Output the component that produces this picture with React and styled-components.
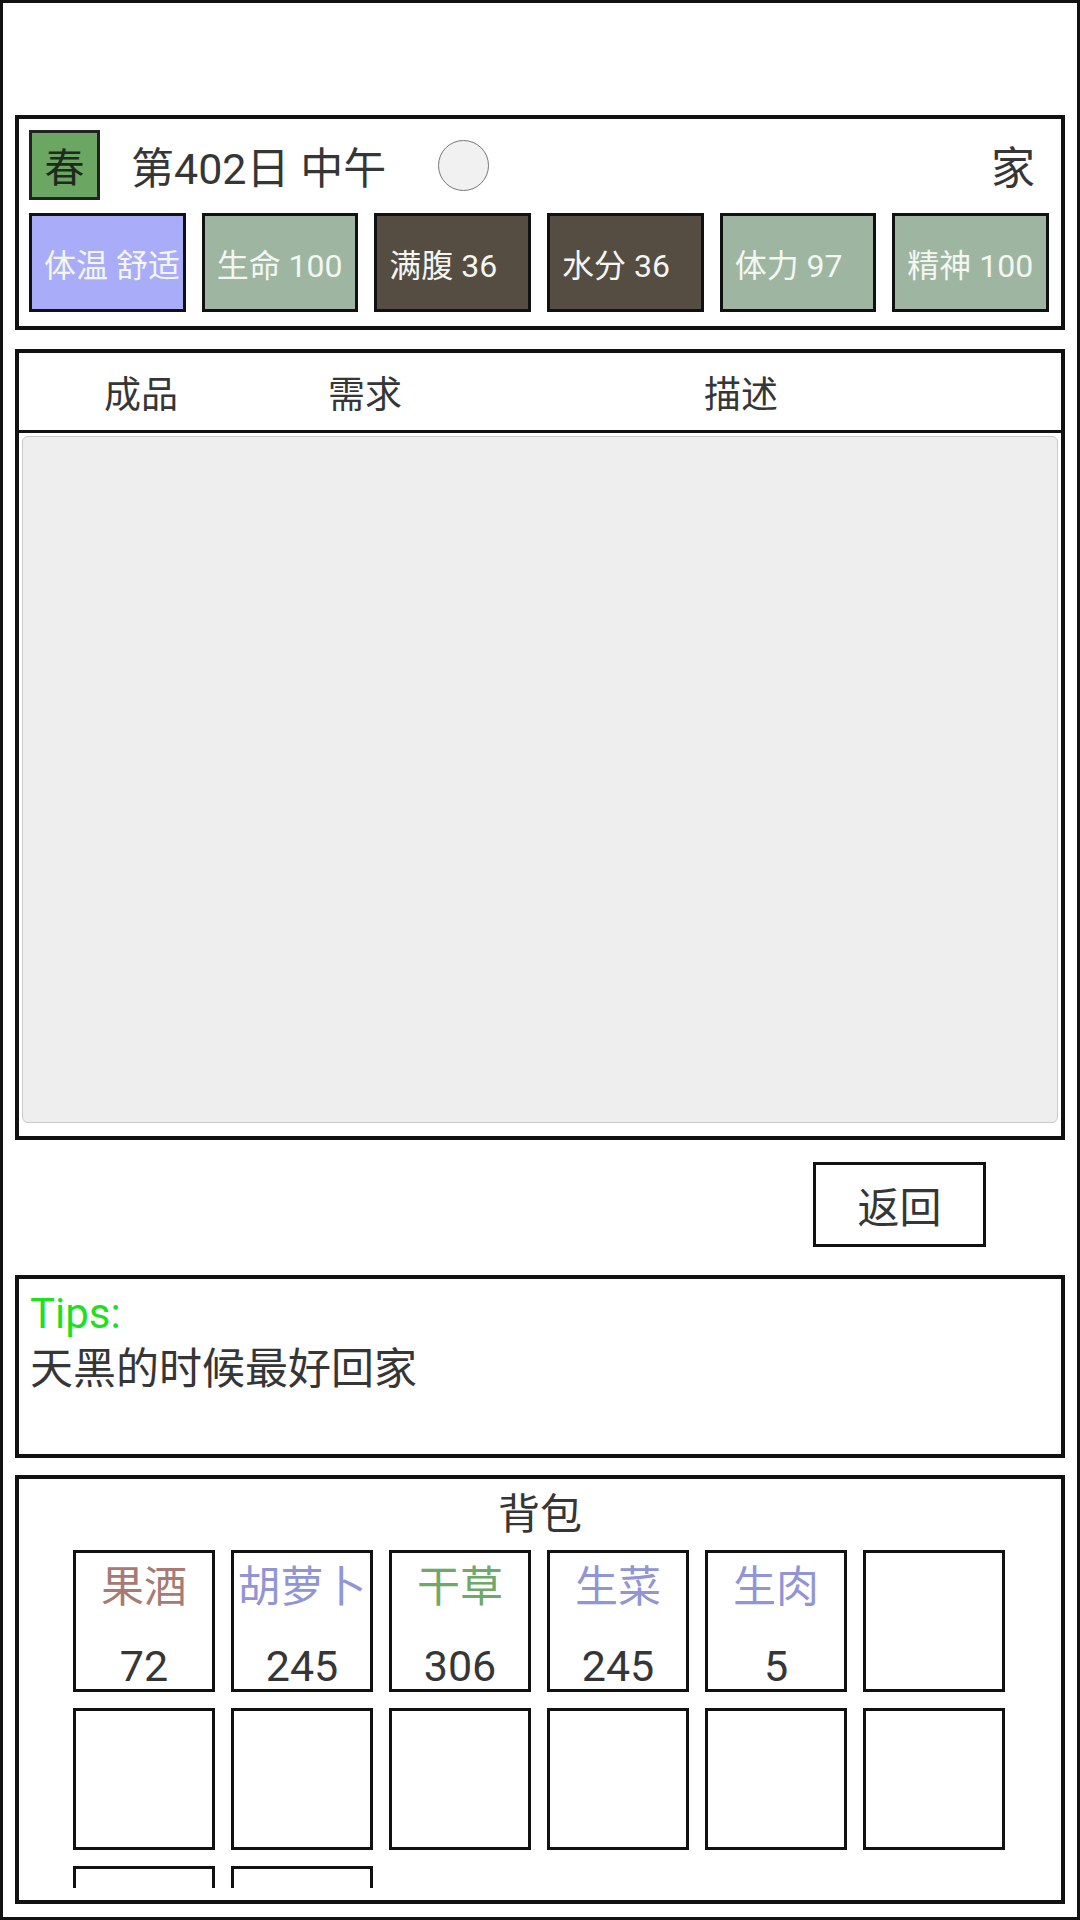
import React from "react";
import styled, { createGlobalStyle } from "styled-components";

const GlobalStyle = createGlobalStyle`
  html, body {
    margin: 0;
    padding: 0;
    background: #fff;
  }
  body {
    font-family: Roboto, "Noto Sans CJK SC", sans-serif;
    color: #363636;
  }
  * { box-sizing: border-box; }
`;

const Screen = styled.div`
  width: 1080px;
  height: 1920px;
  border: 3px solid #111;
  padding: 112px 12px 13px;
  display: flex;
  flex-direction: column;
  overflow: hidden;
`;

const Panel = styled.section`
  border: 4px solid #111;
  background: #fff;
  flex-shrink: 0;
`;

/* ---- status bar ---- */
const StatusPanel = styled(Panel)`
  height: 215px;
  padding: 11px 12px 14px 10px;
`;

const TopRow = styled.div`
  display: flex;
  align-items: center;
  height: 70px;
`;

const SeasonBadge = styled.div`
  width: 71px;
  height: 70px;
  border: 3px solid #222;
  background: #6ba663;
  color: #1e2a1e;
  font-size: 40px;
  display: flex;
  align-items: center;
  justify-content: center;
`;

const DayLabel = styled.div`
  margin-left: 31px;
  font-size: 43px;
  color: #363636;
`;

const SunDial = styled.div`
  width: 51px;
  height: 51px;
  margin-left: 52px;
  border-radius: 50%;
  background: #f1f1f1;
  border: 1.5px solid #777;
`;

const Location = styled.div`
  margin-left: auto;
  margin-right: 14px;
  font-size: 44px;
  color: #363636;
`;

const StatRow = styled.div`
  display: grid;
  grid-template-columns: repeat(6, minmax(0, 1fr));
  gap: 16px;
  margin-top: 13px;
  height: 99px;
`;

const StatBox = styled.div`
  background: ${(p) => p.$bg};
  border: 3px solid #111;
  padding: 0 12px;
  display: flex;
  align-items: center;
  font-size: 32px;
  color: #f4f6f2;
  white-space: nowrap;
  overflow: visible;
`;

/* ---- crafting table ---- */
const CraftPanel = styled(Panel)`
  margin-top: 19px;
  height: 791px;
  display: flex;
  flex-direction: column;
`;

const HeaderRow = styled.div`
  height: 80px;
  border-bottom: 3px solid #111;
  display: grid;
  grid-template-columns: 244px 204px 548px;
  align-items: center;
  font-size: 37px;
  color: #363636;
  text-align: center;
`;

const ListArea = styled.div`
  flex: 1;
  margin: 3px 3px 13px;
  background: #eeeeee;
  border: 1px solid #c9c9c9;
  border-radius: 6px;
`;

/* ---- actions ---- */
const ActionRow = styled.div`
  height: 135px;
  flex-shrink: 0;
  display: flex;
  justify-content: flex-end;
  align-items: flex-start;
  padding: 22px 79px 0 0;
`;

const BackButton = styled.button`
  width: 173px;
  height: 85px;
  border: 3px solid #111;
  background: #fff;
  font-family: Roboto, "Noto Sans CJK SC", sans-serif;
  font-size: 42px;
  color: #363636;
  padding: 0;
`;

/* ---- tips ---- */
const TipsPanel = styled(Panel)`
  height: 183px;
  padding: 8px 11px;
`;

const TipsTitle = styled.div`
  font-size: 42px;
  line-height: 54px;
  color: #1ee01e;
`;

const TipsText = styled.div`
  font-size: 43px;
  line-height: 56px;
  color: #363636;
`;

/* ---- backpack ---- */
const BagPanel = styled(Panel)`
  margin-top: 17px;
  height: 429px;
  padding: 9px 0 12px;
  display: flex;
  flex-direction: column;
`;

const BagTitle = styled.div`
  font-size: 42px;
  line-height: 54px;
  text-align: center;
  color: #363636;
`;

const BagViewport = styled.div`
  flex: 1;
  margin-top: 8px;
  overflow: hidden;
`;

const BagGrid = styled.div`
  display: grid;
  grid-template-columns: repeat(6, 142px);
  grid-auto-rows: 142px;
  gap: 16px;
  justify-content: center;
  transform: translateX(-1px);
`;

const Slot = styled.div`
  border: 3px solid #111;
  background: #fff;
  display: flex;
  flex-direction: column;
  align-items: center;
  padding-top: 9px;
`;

const ItemName = styled.div`
  font-size: 43px;
  line-height: 50px;
  color: ${(p) => p.$color};
  white-space: nowrap;
`;

const ItemCount = styled.div`
  margin-top: 30px;
  font-size: 43px;
  line-height: 48px;
  color: #363636;
`;

const stats = [
  { label: "体温 舒适", bg: "#a9adf9" },
  { label: "生命 100", bg: "#9db5a1" },
  { label: "满腹 36", bg: "#554c42" },
  { label: "水分 36", bg: "#554c42" },
  { label: "体力 97", bg: "#9db5a1" },
  { label: "精神 100", bg: "#9db5a1" },
];

const items = [
  { name: "果酒", count: 72, color: "#a77a74" },
  { name: "胡萝卜", count: 245, color: "#9195d6" },
  { name: "干草", count: 306, color: "#6fa868" },
  { name: "生菜", count: 245, color: "#9195d6" },
  { name: "生肉", count: 5, color: "#9195d6" },
];

const SLOT_COUNT = 14;

export default function App() {
  const slots = Array.from({ length: SLOT_COUNT }, (_, i) => items[i] || null);
  return (
    <>
      <GlobalStyle />
      <Screen>
        <StatusPanel>
          <TopRow>
            <SeasonBadge>春</SeasonBadge>
            <DayLabel>第402日 中午</DayLabel>
            <SunDial />
            <Location>家</Location>
          </TopRow>
          <StatRow>
            {stats.map((s) => (
              <StatBox key={s.label} $bg={s.bg}>
                {s.label}
              </StatBox>
            ))}
          </StatRow>
        </StatusPanel>

        <CraftPanel>
          <HeaderRow>
            <span>成品</span>
            <span>需求</span>
            <span>描述</span>
          </HeaderRow>
          <ListArea />
        </CraftPanel>

        <ActionRow>
          <BackButton>返回</BackButton>
        </ActionRow>

        <TipsPanel>
          <TipsTitle>Tips:</TipsTitle>
          <TipsText>天黑的时候最好回家</TipsText>
        </TipsPanel>

        <BagPanel>
          <BagTitle>背包</BagTitle>
          <BagViewport>
            <BagGrid>
              {slots.map((it, i) => (
                <Slot key={i}>
                  {it && (
                    <>
                      <ItemName $color={it.color}>{it.name}</ItemName>
                      <ItemCount>{it.count}</ItemCount>
                    </>
                  )}
                </Slot>
              ))}
            </BagGrid>
          </BagViewport>
        </BagPanel>
      </Screen>
    </>
  );
}
